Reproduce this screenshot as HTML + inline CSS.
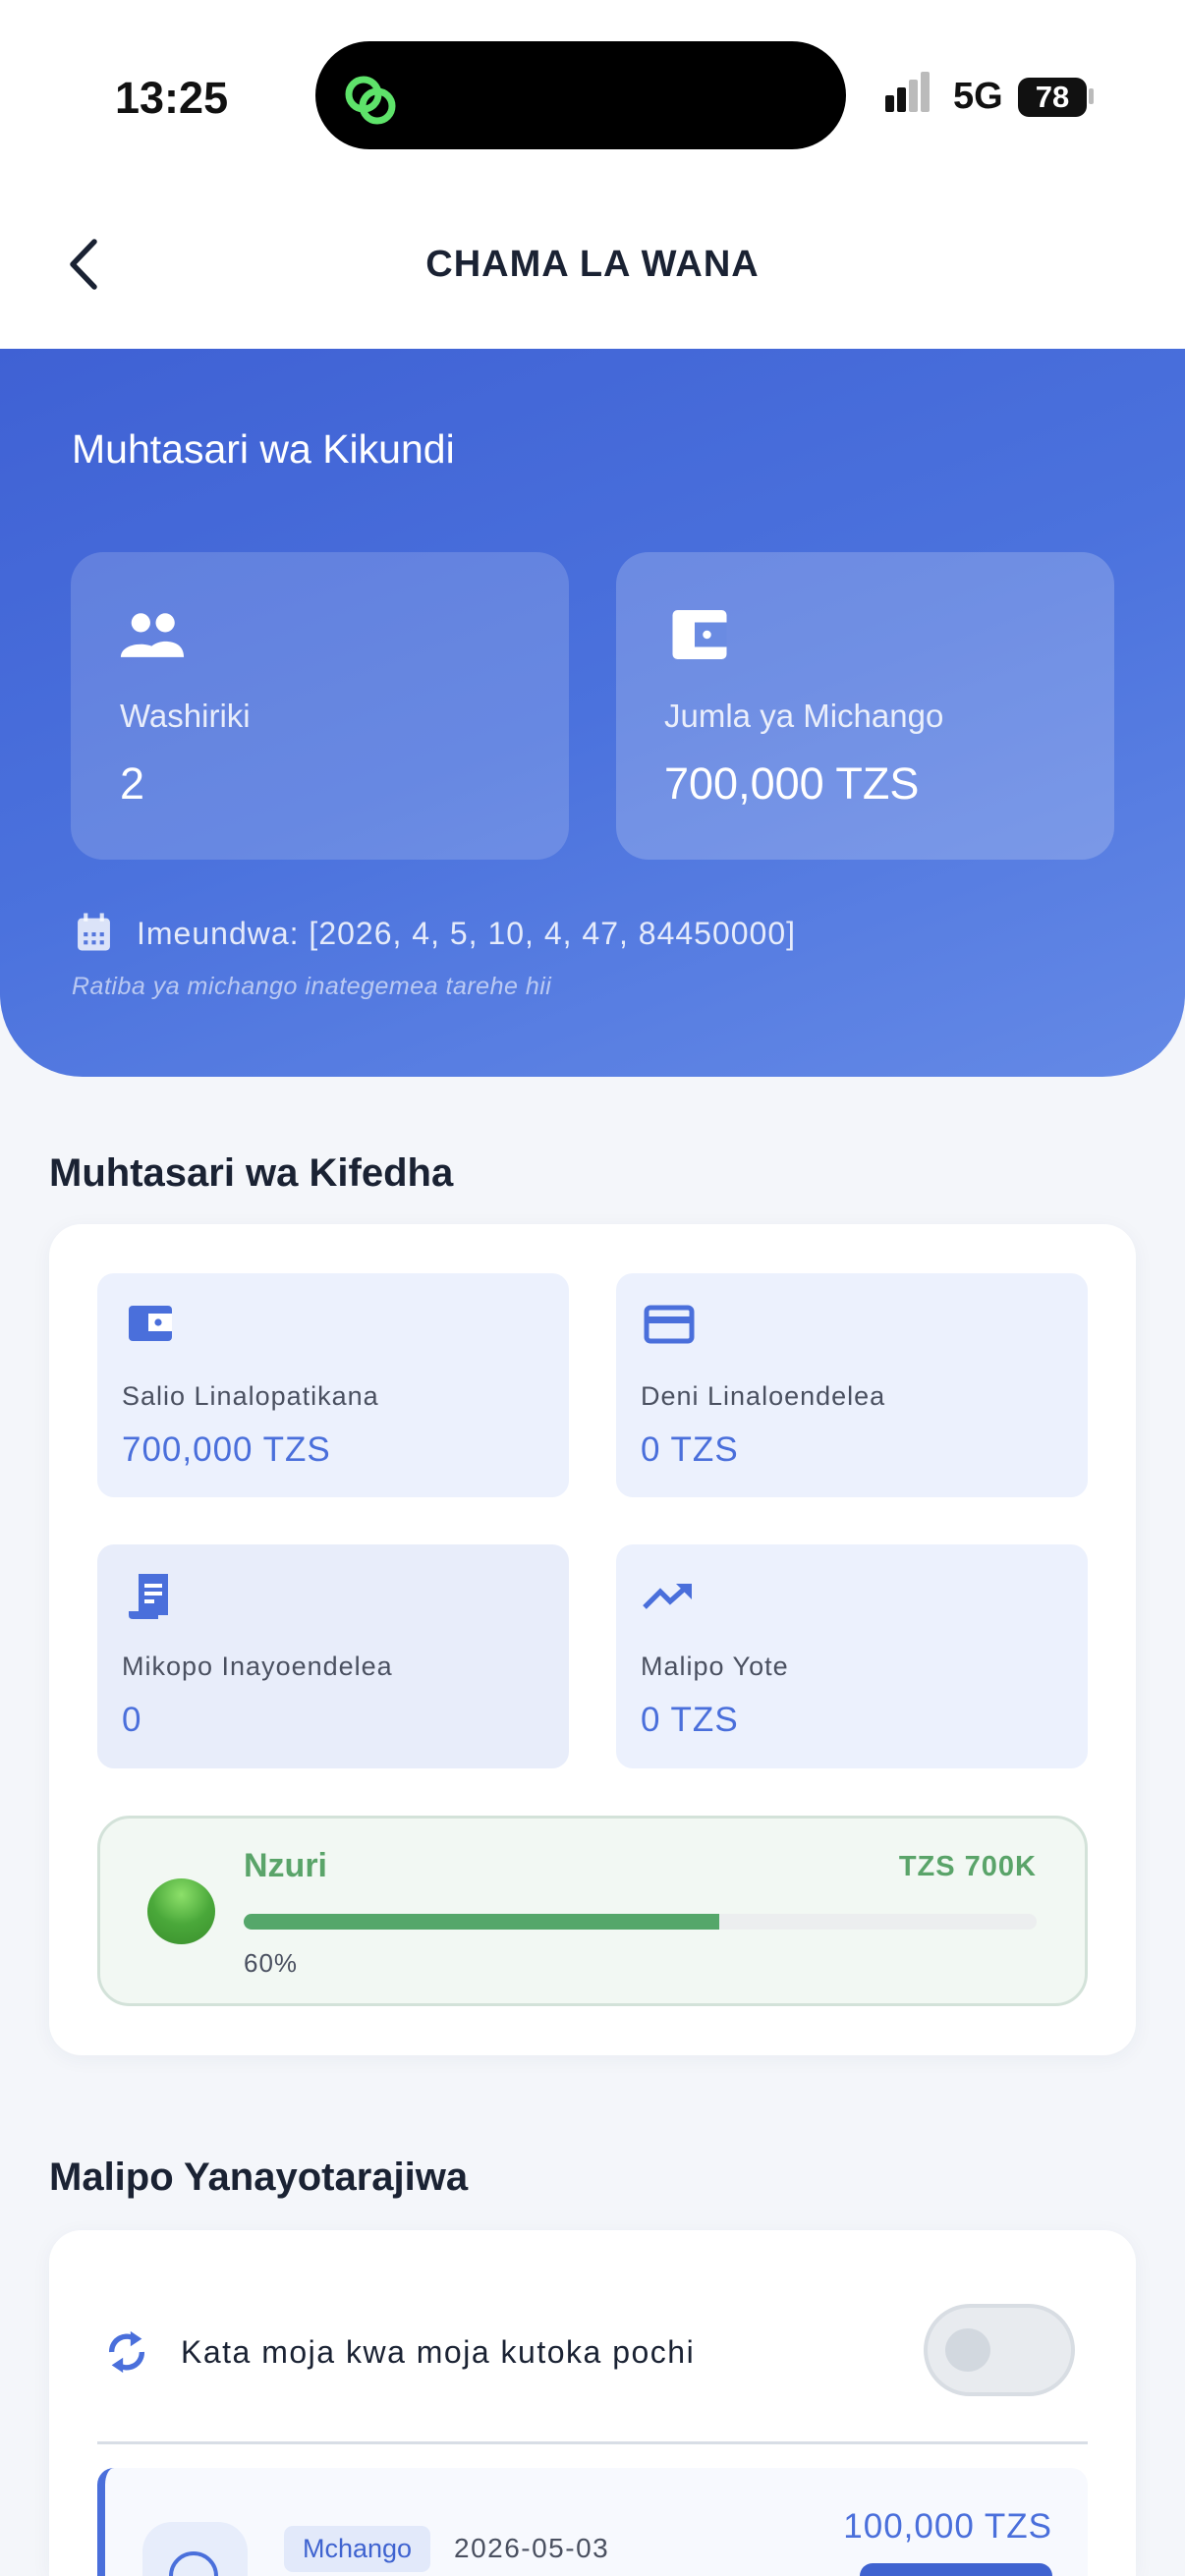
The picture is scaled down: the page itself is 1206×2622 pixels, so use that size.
<!DOCTYPE html>
<html style="width:1206px;height:2622px;overflow:hidden"><head><meta charset="utf-8">
<style>
*{margin:0;padding:0;box-sizing:border-box}
body{width:1206px;height:2622px;overflow:hidden;background:#f4f6fa;font-family:"Liberation Sans",sans-serif;position:relative;color:#1a2233}
.a{position:absolute}
.top{left:0;top:0;width:1206px;height:355px;background:#fff}
.hdr{left:0;top:355px;width:1206px;height:741px;border-radius:0 0 84px 84px;background:linear-gradient(160deg,#3f61d4 0%,#4b72dd 50%,#6489e6 100%)}
.gc{background:rgba(255,255,255,0.16);border-radius:33px;width:507px;height:313px;top:562px}
.w{color:#fff}
.card{background:#fff;border-radius:33px;box-shadow:0 4px 20px rgba(30,50,100,0.05)}
.ic{background:#ecf1fd;border-radius:17px;width:480px;height:228px}
.lbl{font-size:27px;color:#4a5060;letter-spacing:1px}
.val{font-size:35px;color:#4a6fdb;letter-spacing:1px}
</style></head><body>
<div class="a top"></div>
<div class="a" style="left:117px;top:74px;font-size:45px;font-weight:bold;color:#111">13:25</div>
<div class="a" style="left:321px;top:42px;width:540px;height:110px;border-radius:55px;background:#000"></div>
<svg class="a" style="left:344px;top:74px" width="72" height="56" viewBox="0 0 72 56"><circle cx="26" cy="22" r="15" fill="none" stroke="#5ee36a" stroke-width="7"/><circle cx="40" cy="34" r="15" fill="none" stroke="#5ee36a" stroke-width="7"/></svg>
<div class="a" style="left:901px;top:97px;width:9px;height:17px;background:#111;border-radius:2px"></div>
<div class="a" style="left:913px;top:89px;width:9px;height:25px;background:#111;border-radius:2px"></div>
<div class="a" style="left:925px;top:81px;width:9px;height:33px;background:#bbb;border-radius:2px"></div>
<div class="a" style="left:937px;top:73px;width:9px;height:41px;background:#bbb;border-radius:2px"></div>
<div class="a" style="left:970px;top:77px;font-size:38px;font-weight:bold;color:#111">5G</div>
<div class="a" style="left:1036px;top:79px;width:70px;height:40px;border-radius:11px;background:#111;color:#fff;font-size:31px;font-weight:bold;text-align:center;line-height:40px">78</div>
<div class="a" style="left:1108px;top:90px;width:5px;height:16px;background:#bbb;border-radius:2px"></div>
<svg class="a" style="left:60px;top:238px" width="50" height="62" viewBox="0 0 50 62"><path d="M36 8 L14 31 L36 54" fill="none" stroke="#1a2233" stroke-width="5.5" stroke-linecap="round" stroke-linejoin="round"/></svg>
<div class="a" style="left:0;width:1206px;top:248px;text-align:center;font-size:38px;font-weight:bold;color:#1a2233;letter-spacing:1px">CHAMA LA WANA</div>

<div class="a hdr"></div>
<div class="a w" style="left:73px;top:434px;font-size:41px">Muhtasari wa Kikundi</div>
<div class="a gc" style="left:72px"></div>
<div class="a gc" style="left:627px;background:rgba(255,255,255,0.2)"></div>
<svg class="a" style="left:120px;top:622px" width="70" height="50" viewBox="0 0 24 17"><circle cx="8" cy="4" r="3.3" fill="#fff"/><circle cx="16.5" cy="4" r="3.3" fill="#fff"/><path d="M1 16 C1 10 15 10 15 16Z M10 16 C10 12 14 10.5 16.5 10.5 C20 10.5 23 12 23 16Z" fill="#fff"/></svg>
<svg class="a" style="left:682px;top:618px" width="60" height="56" viewBox="0 0 24 22"><rect x="1" y="1" width="22" height="20" rx="2" fill="#fff"/><rect x="10" y="6" width="13" height="10" fill="#6a8be2"/><circle cx="15" cy="11" r="1.7" fill="#fff"/></svg>
<div class="a" style="left:122px;top:710px;font-size:33px;color:rgba(255,255,255,0.85)">Washiriki</div>
<div class="a w" style="left:122px;top:772px;font-size:45px">2</div>
<div class="a" style="left:676px;top:710px;font-size:33px;color:rgba(255,255,255,0.85)">Jumla ya Michango</div>
<div class="a w" style="left:676px;top:772px;font-size:45px">700,000 TZS</div>
<svg class="a" style="left:77px;top:928px" width="37" height="42" viewBox="0 0 18 20"><rect x="1" y="3" width="16" height="16" rx="2" fill="rgba(255,255,255,0.8)"/><rect x="4" y="0.5" width="2" height="4" fill="rgba(255,255,255,0.8)"/><rect x="12" y="0.5" width="2" height="4" fill="rgba(255,255,255,0.8)"/><g fill="#5577dd"><rect x="4" y="10" width="2" height="2"/><rect x="8" y="10" width="2" height="2"/><rect x="12" y="10" width="2" height="2"/><rect x="4" y="14" width="2" height="2"/><rect x="8" y="14" width="2" height="2"/><rect x="12" y="14" width="2" height="2"/></g></svg>
<div class="a" style="left:139px;top:932px;font-size:32px;color:rgba(255,255,255,0.85);letter-spacing:1px">Imeundwa: [2026, 4, 5, 10, 4, 47, 84450000]</div>
<div class="a" style="left:73px;top:990px;font-size:25px;font-style:italic;color:rgba(255,255,255,0.6);letter-spacing:0.5px">Ratiba ya michango inategemea tarehe hii</div>

<div class="a" style="left:50px;top:1172px;font-size:40px;font-weight:bold;color:#1a2233">Muhtasari wa Kifedha</div>
<div class="a card" style="left:50px;top:1246px;width:1106px;height:846px"></div>
<div class="a ic" style="left:99px;top:1296px"></div>
<div class="a ic" style="left:627px;top:1296px"></div>
<div class="a ic" style="left:99px;top:1572px;background:#e8edfa"></div>
<div class="a ic" style="left:627px;top:1572px"></div>
<svg class="a" style="left:129px;top:1327px" width="48" height="40" viewBox="0 0 24 20"><rect x="1" y="1" width="22" height="18" rx="2" fill="#4a6fdb"/><rect x="11" y="5" width="12" height="9" fill="#fff"/><circle cx="16" cy="9.5" r="1.8" fill="#4a6fdb"/></svg>
<svg class="a" style="left:655px;top:1328px" width="52" height="40" viewBox="0 0 26 20"><rect x="1.5" y="1.5" width="23" height="17" rx="2" fill="none" stroke="#4a6fdb" stroke-width="2.5"/><rect x="1.5" y="6" width="23" height="3.5" fill="#4a6fdb"/></svg>
<svg class="a" style="left:129px;top:1600px" width="48" height="50" viewBox="0 0 24 25"><path d="M6 1 L21 1 L21 22 L6 22Z" fill="#4a6fdb"/><path d="M1 20 L16 20 L16 24 L3 24 Q1 24 1 22Z" fill="#4a6fdb"/><rect x="9" y="6" width="9" height="2" fill="#fff"/><rect x="9" y="10" width="9" height="2" fill="#fff"/><rect x="9" y="14" width="5" height="2" fill="#fff"/></svg>
<svg class="a" style="left:654px;top:1610px" width="52" height="30" viewBox="0 0 26 15"><path d="M1 13 L9 5 L14 10 L23 2" fill="none" stroke="#4a6fdb" stroke-width="2.6"/><path d="M17 1 L25 1 L25 9Z" fill="#4a6fdb"/></svg>
<div class="a lbl" style="left:124px;top:1406px">Salio Linalopatikana</div>
<div class="a val" style="left:124px;top:1456px">700,000 TZS</div>
<div class="a lbl" style="left:652px;top:1406px">Deni Linaloendelea</div>
<div class="a val" style="left:652px;top:1456px">0 TZS</div>
<div class="a lbl" style="left:124px;top:1681px">Mikopo Inayoendelea</div>
<div class="a val" style="left:124px;top:1731px">0</div>
<div class="a lbl" style="left:652px;top:1681px">Malipo Yote</div>
<div class="a val" style="left:652px;top:1731px">0 TZS</div>

<div class="a" style="left:99px;top:1848px;width:1008px;height:194px;border-radius:33px;background:#f2f8f3;border:3px solid #d3e2d9"></div>
<div class="a" style="left:150px;top:1912px;width:69px;height:67px;border-radius:50%;background:radial-gradient(circle at 50% 25%,#8de06a 0%,#4aa83a 50%,#3a8f2c 100%)"></div>
<div class="a" style="left:248px;top:1880px;font-size:34px;font-weight:bold;color:#5aa469">Nzuri</div>
<div class="a" style="left:800px;width:255px;text-align:right;top:1884px;font-size:29px;font-weight:bold;color:#5aa469;letter-spacing:1px">TZS 700K</div>
<div class="a" style="left:248px;top:1948px;width:807px;height:16px;border-radius:8px;background:#eceeef"></div>
<div class="a" style="left:248px;top:1948px;width:484px;height:16px;border-radius:8px 0 0 8px;background:#55a76a"></div>
<div class="a" style="left:248px;top:1983px;font-size:26px;color:#4a5060;letter-spacing:1px">60%</div>

<div class="a" style="left:50px;top:2194px;font-size:40px;font-weight:bold;color:#1a2233">Malipo Yanayotarajiwa</div>
<div class="a card" style="left:50px;top:2270px;width:1106px;height:352px;border-radius:33px 33px 0 0"></div>
<svg class="a" style="left:106px;top:2368px" width="46" height="52" viewBox="0 0 24 26"><path d="M4 13 A8 8 0 0 1 17 6.5" fill="none" stroke="#4a6fdb" stroke-width="2.8"/><path d="M14 2 L20 6 L14 10Z" fill="#4a6fdb"/><path d="M20 13 A8 8 0 0 1 7 19.5" fill="none" stroke="#4a6fdb" stroke-width="2.8"/><path d="M10 24 L4 20 L10 16Z" fill="#4a6fdb"/></svg>
<div class="a" style="left:184px;top:2376px;font-size:32px;color:#1a2233;letter-spacing:1.5px">Kata moja kwa moja kutoka pochi</div>
<div class="a" style="left:940px;top:2345px;width:154px;height:94px;border-radius:47px;background:#e8ebef;border:4px solid #d8dde3"></div>
<div class="a" style="left:962px;top:2370px;width:46px;height:44px;border-radius:50%;background:#d2d8df"></div>
<div class="a" style="left:99px;top:2485px;width:1008px;height:3px;background:#d8dee6"></div>
<div class="a" style="left:99px;top:2512px;width:1008px;height:110px;border-radius:17px 17px 0 0;background:#f7f9fe;border-left:8px solid #4a6fdb"></div>
<div class="a" style="left:145px;top:2567px;width:107px;height:55px;border-radius:30px 30px 0 0;background:#e7edfb"></div>
<div class="a" style="left:172px;top:2597px;width:50px;height:50px;border-radius:50%;border:4px solid #4a6fdb"></div>
<div class="a" style="left:289px;top:2571px;width:149px;height:47px;border-radius:9px;background:#e2e9fa;color:#3f63d0;font-size:27px;text-align:center;line-height:47px">Mchango</div>
<div class="a" style="left:462px;top:2578px;font-size:28px;color:#4a5060;letter-spacing:1.5px">2026-05-03</div>
<div class="a" style="left:800px;width:271px;text-align:right;top:2552px;font-size:35px;color:#4a6fdb;letter-spacing:1px">100,000 TZS</div>
<div class="a" style="left:875px;top:2609px;width:196px;height:13px;border-radius:14px 14px 0 0;background:#3f63d0"></div>
</body></html>
